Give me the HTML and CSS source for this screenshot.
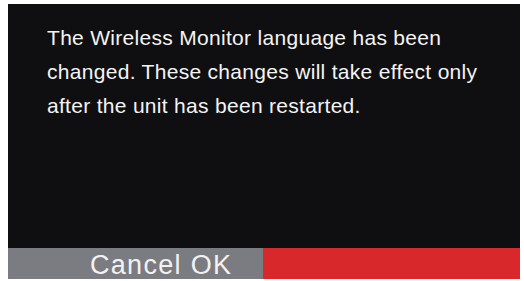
FILE: index.html
```html
<!DOCTYPE html>
<html>
<head>
<meta charset="utf-8">
<link rel="stylesheet" href="styles.css">
</head>
<body>
<div class="screen">
  <div class="message">The Wireless Monitor language has been changed. These changes will take effect only after the unit has been restarted.</div>
  <div class="bar">
    <div class="btn-left">Cancel OK</div>
    <div class="btn-right"></div>
  </div>
</div>
</body>
</html>
```
FILE: styles.css
```css
html, body {
  margin: 0;
  padding: 0;
  background: #ffffff;
}
body {
  width: 524px;
  height: 281px;
  padding: 4px 4px 2px 8px;
  box-sizing: border-box;
}
.screen {
  width: 512px;
  height: 275px;
  background: #0f0f11;
  display: flex;
  flex-direction: column;
  font-family: "Liberation Sans", Arial, sans-serif;
}
.message {
  flex: 1;
  color: #f4f4f4;
  font-size: 21px;
  letter-spacing: 0.3px;
  line-height: 34px;
  padding: 17px 20px 0 39px;
}
.bar {
  height: 31px;
  display: flex;
}
.btn-left {
  width: 255px;
  height: 31px;
  background: #7b7c81;
  color: #f2f2f2;
  font-size: 27px;
  letter-spacing: 1.3px;
  line-height: 29px;
  padding: 3px 0 0 82px;
  box-sizing: border-box;
  white-space: nowrap;
  overflow: hidden;
}
.btn-right {
  flex: 1;
  background: #d8282c;
}
```
